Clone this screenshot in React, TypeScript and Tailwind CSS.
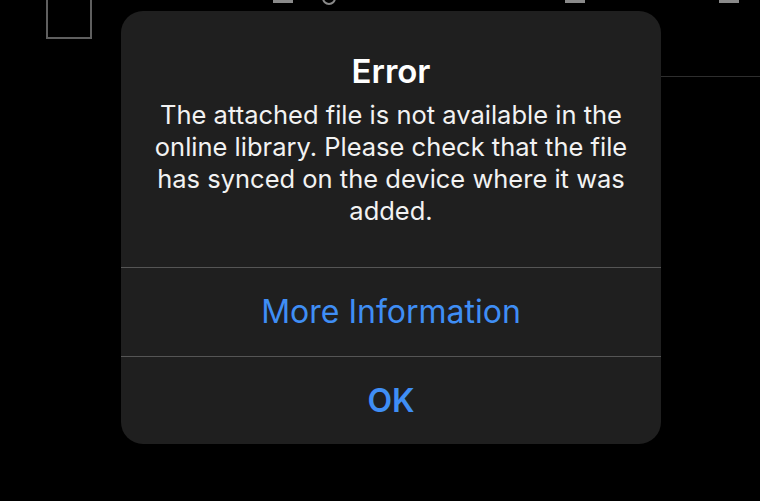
import React from 'react';

const App = () => {
  return (
    <div
      className="relative w-[760px] h-[501px] bg-black overflow-hidden"
      style={{ fontFamily: 'Inter, "Noto Sans", sans-serif' }}
    >
      {/* background fragments of the page behind the alert */}
      <div className="absolute left-[46px] -top-[4px] w-[46px] h-[43px] border-2 border-[#5f5f5f]" />
      <div className="absolute left-[273px] top-0 w-[20px] h-[3px] bg-[#8a8a8a]" />
      <div className="absolute left-[322px] -top-[9px] w-[14px] h-[14px] rounded-full border-2 border-[#8a8a8a]" />
      <div className="absolute left-[565px] top-0 w-[20px] h-[3px] bg-[#8a8a8a]" />
      <div className="absolute left-[719px] top-0 w-[20px] h-[3px] bg-[#8a8a8a]" />
      <div className="absolute left-[661px] top-[76px] w-[99px] h-px bg-[#2e2e2e]" />

      <div className="flex pt-[11px] pl-[121px]">
        <div className="w-[540px] h-[433px] rounded-[22px] bg-[#1f1f1f] flex flex-col overflow-hidden">
          <div className="h-[256px] flex flex-col items-center pt-[40px] px-[20px] text-white text-center">
            <h1 className="text-[33px] leading-[40px] font-semibold">Error</h1>
            <p className="mt-[8px] text-[25.5px] leading-[32px] text-[#f2f2f2]">
              The attached file is not available in the online library. Please check that the file has synced on the device where it was added.
            </p>
          </div>
          <div className="h-px bg-[#555555]" />
          <button className="h-[88px] flex items-center justify-center text-[32px] text-[#3f8ef5]">
            More Information
          </button>
          <div className="h-px bg-[#555555]" />
          <button className="flex-1 flex items-center justify-center text-[32px] font-semibold text-[#3f8ef5]">
            OK
          </button>
        </div>
      </div>
    </div>
  );
};

export default App;
